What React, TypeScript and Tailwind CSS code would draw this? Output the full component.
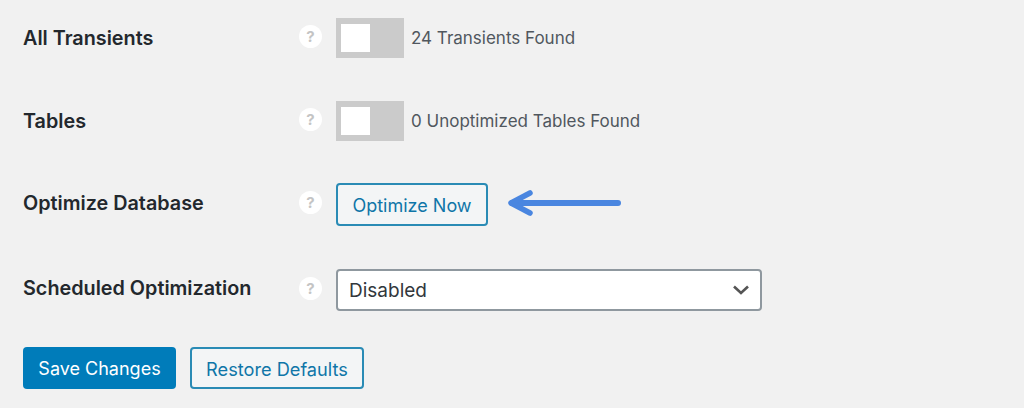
import React from "react";

function Help() {
  return (
    <div className="w-[23px] h-[23px] rounded-full bg-white flex items-center justify-center text-[15px] font-bold text-[#c4c4c4] leading-none">?</div>
  );
}

function Toggle() {
  return (
    <div className="w-[68px] h-[40px] bg-[#cbcbcb] pl-[5px] pt-[6px] shrink-0">
      <div className="w-[29px] h-[28px] bg-white" />
    </div>
  );
}

function Row({ label, children, className = "", offset = "" }: { label: string; children: React.ReactNode; className?: string; offset?: string }) {
  return (
    <div className={`flex items-center ${className}`}>
      <div className={`w-[276px] text-[19.8px] font-semibold text-[#23282d] leading-none ${offset}`}>{label}</div>
      <div className="w-[37px] pb-[4px]"><Help /></div>
      {children}
    </div>
  );
}

export default function App() {
  return (
    <div className="w-[1024px] h-[408px] bg-[#f1f1f1] pt-[18px] pl-[23px] overflow-hidden font-['Inter',sans-serif]">
      <Row label="All Transients" offset="pt-[2px]">
        <Toggle />
        <span className="ml-[7px] text-[17px] text-[#50575e] pt-[2px]">24 Transients Found</span>
      </Row>
      <Row label="Tables" className="mt-[43px]" offset="pt-[2px]">
        <Toggle />
        <span className="ml-[7px] text-[17px] text-[#50575e] pt-[2px]">0 Unoptimized Tables Found</span>
      </Row>
      <Row label="Optimize Database" className="mt-[42px]" offset="pb-[1px]">
        <button className="w-[152px] h-[43px] border-2 border-[#2a8bb5] rounded-[4px] bg-[#f3f5f6] text-[#0f76a8] text-[18px] leading-none pt-[2px]">Optimize Now</button>
        <svg className="ml-[18px] mb-[3px]" width="118" height="30" viewBox="0 0 118 30" fill="none" stroke="#4a86e0" strokeLinecap="round" strokeLinejoin="round">
          <path d="M6 15H112" strokeWidth="6" />
          <path d="M24 5L5 15L24 25" strokeWidth="5.5" />
        </svg>
      </Row>
      <Row label="Scheduled Optimization" className="mt-[43px]" offset="pb-[2px]">
        <div className="w-[426px] h-[42px] border-2 border-[#8f989f] rounded-[4px] bg-white flex items-center justify-between pl-[11px] pr-[11px]">
          <span className="text-[19px] text-[#32373c] leading-none pt-[1px]">Disabled</span>
          <svg width="16" height="10" viewBox="0 0 16 10" fill="none" stroke="#555" strokeWidth="2.6">
            <path d="M1 1.5L8 8L15 1.5" />
          </svg>
        </div>
      </Row>
      <div className="flex mt-[36px] gap-[14px]">
        <button className="w-[153px] h-[42px] rounded-[4px] bg-[#007cba] text-white text-[18px] leading-none pt-[2px]">Save Changes</button>
        <button className="w-[174px] h-[42px] border-2 border-[#2a8bb5] rounded-[4px] bg-[#f3f5f6] text-[#0f76a8] text-[18.2px] leading-none pt-[2px]">Restore Defaults</button>
      </div>
    </div>
  );
}
